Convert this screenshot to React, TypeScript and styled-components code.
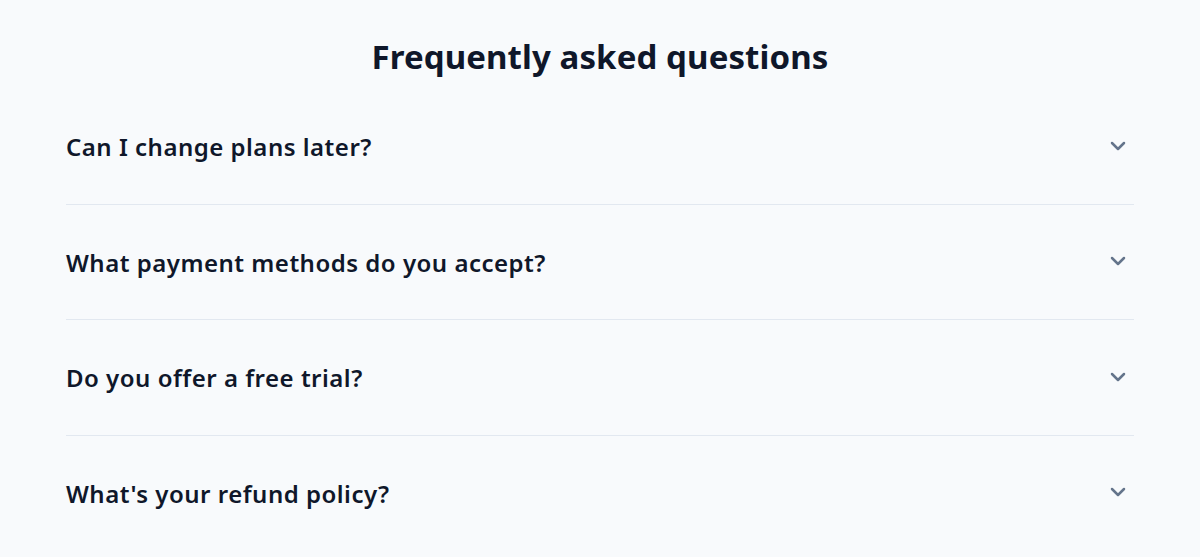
import React from 'react';
import styled, { createGlobalStyle } from 'styled-components';
import { ChevronDown } from 'lucide-react';

const GlobalStyle = createGlobalStyle`
  *, *::before, *::after {
    box-sizing: border-box;
  }
  html, body {
    margin: 0;
    padding: 0;
    background: #f8fafc;
    font-family: "Noto Sans", "Open Sans", sans-serif;
    color: #0f172a;
  }
`;

const Section = styled.section`
  max-width: 1100px;
  margin: 0 auto;
  padding: 33px 16px 0;
`;

const Title = styled.h2`
  margin: 0 0 8px;
  text-align: center;
  font-size: 33px;
  line-height: 48px;
  font-weight: 700;
  letter-spacing: 0.1px;
`;

const List = styled.div`
  display: flex;
  flex-direction: column;
`;

const Item = styled.div<{ last?: boolean }>`
  border-bottom: ${(props) => (props.last ? 'none' : '1px solid #e2e8f0')};
`;

const Question = styled.button`
  width: 100%;
  display: flex;
  align-items: center;
  justify-content: space-between;
  padding: 42px 0 40.5px;
  border: none;
  background: transparent;
  font-family: inherit;
  font-size: 24px;
  line-height: 32px;
  font-weight: 600;
  letter-spacing: 0.5px;
  color: #0f172a;
  text-align: left;
  cursor: pointer;
`;

const IconBox = styled.span`
  width: 32px;
  display: flex;
  justify-content: center;
  color: #64748b;
  margin-top: -3px;
`;

const questions = [
  'Can I change plans later?',
  'What payment methods do you accept?',
  'Do you offer a free trial?',
  "What's your refund policy?",
];

export default function App() {
  return (
    <>
      <GlobalStyle />
      <Section>
        <Title>Frequently asked questions</Title>
        <List>
          {questions.map((q, index) => (
            <Item key={index} last={index === questions.length - 1}>
              <Question>
                {q}
                <IconBox>
                  <ChevronDown size={24} strokeWidth={2.5} />
                </IconBox>
              </Question>
            </Item>
          ))}
        </List>
      </Section>
    </>
  );
}
